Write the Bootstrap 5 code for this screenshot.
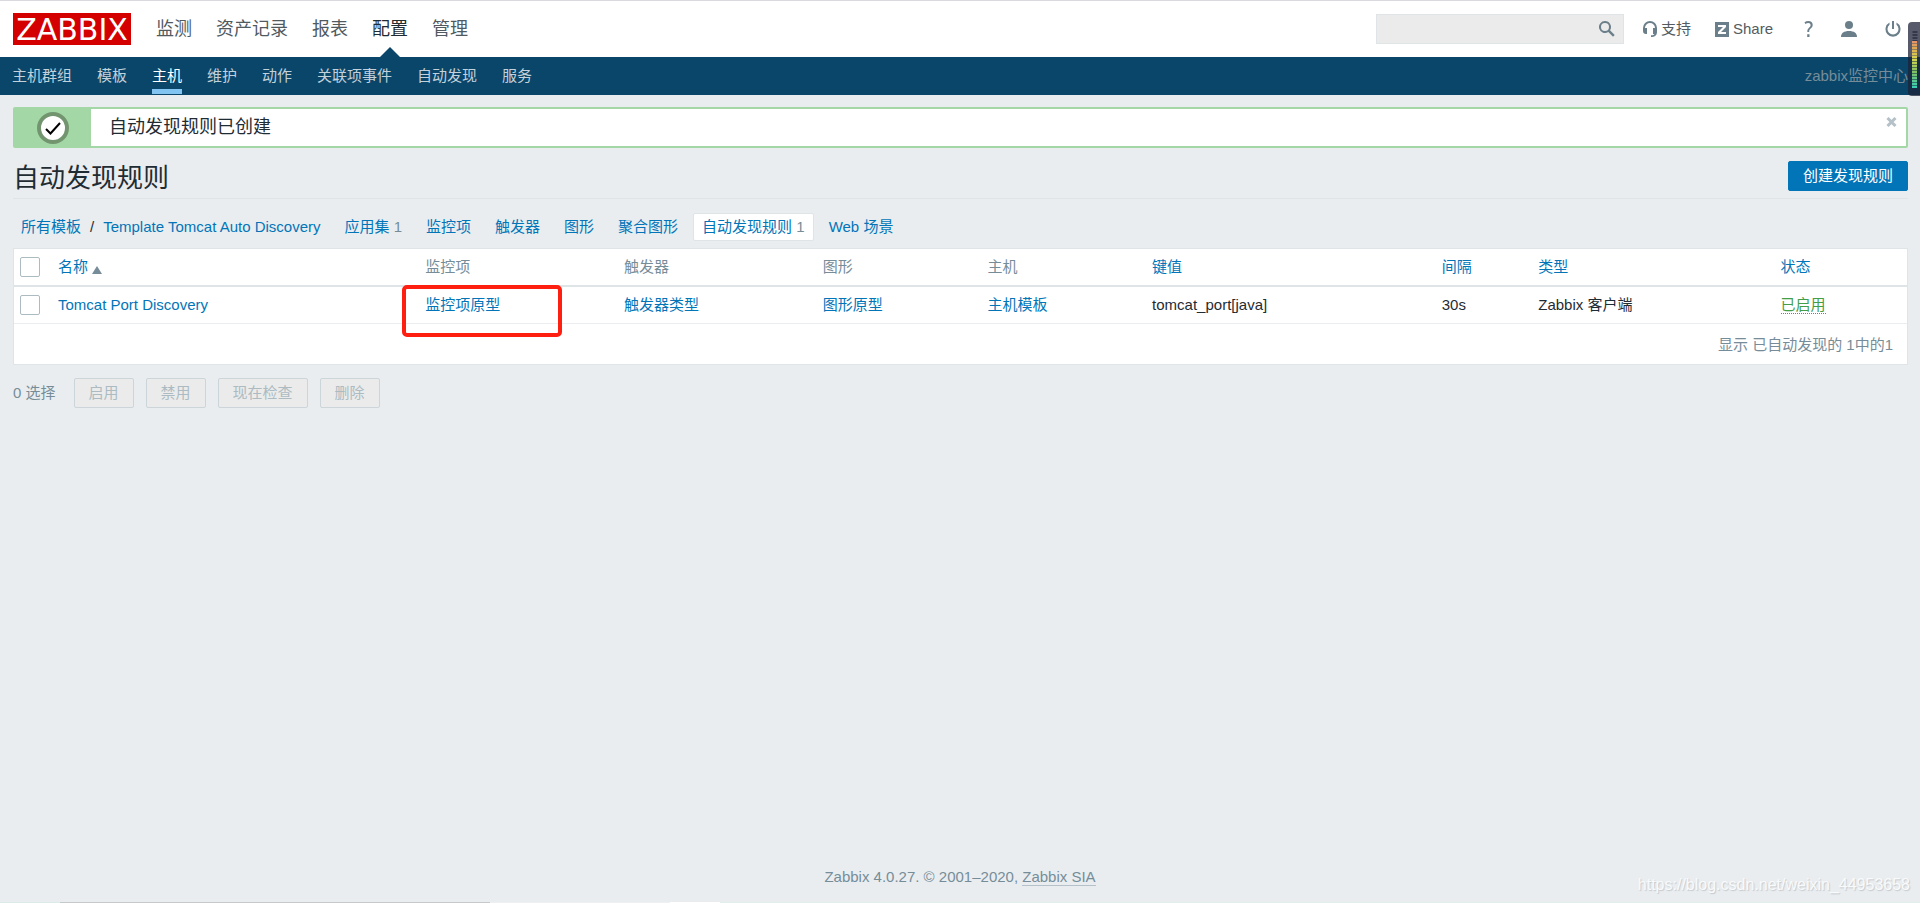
<!DOCTYPE html>
<html lang="zh-CN">
<head>
<meta charset="utf-8">
<meta name="viewport" content="width=device-width, initial-scale=1">
<title>自动发现规则</title>
<link rel="stylesheet" href="https://cdn.jsdelivr.net/npm/bootstrap@5.3.0/dist/css/bootstrap.min.css">
<style>
body{font-family:"Liberation Sans","Noto Sans CJK SC",sans-serif;font-size:15px;line-height:20px;color:#1f2c33;background:#e9edf0}
a{color:#0275b8;text-decoration:none}
.topbar{height:57px;background:#fff;border-top:1px solid #d9d9de;padding:0 19px 0 13px}
.logo{background:#d40000;color:#fff;width:118px;height:32px}
.logo svg{display:block;overflow:visible}
.mainmenu{gap:24px;margin-left:25px;font-size:18px;line-height:26px}
.mainmenu a{color:#505a5f;height:56px;display:flex;align-items:center;position:relative}
.mainmenu a.on{color:#1f2c33}
.mainmenu a.on::after{content:"";position:absolute;bottom:0;left:50%;margin-left:-10px;border:10px solid transparent;border-top:0;border-bottom-color:#0a466a}
.searchbox{width:248px;height:30px;background:#ebebeb;border:1px solid #dfe4e7;margin-right:19px}
.searchbox input{background:none;border:0;outline:0;width:100%}
.searchbox button,.msgclose{background:none;border:0;padding:0;display:flex}
.tools a{color:#525c61;display:flex;align-items:center}
.tools svg{fill:#6b7f8a;flex:none}
.iconlinks{gap:28px;margin-left:31px}
.submenu{height:38px;background:#0a466a;padding:0 12px}
.submenu nav{gap:25px}
.submenu nav a{color:#c3d1da;height:37px;line-height:38px;border-bottom:5px solid transparent}
.submenu nav a.on{color:#fff;border-color:#83c5f2}
.srv{color:#768d99}
.page-area{padding:12px 12px 0 13px}
.okmsg{height:41px;border:2px solid #a3d7a5;border-radius:2px;background:#fff}
.okicon{width:76px;background:#a3d7a5}
.oktext{font-size:18px;padding-left:18px;line-height:36px}
.msgclose{margin:8px 9px 0 0;align-self:flex-start}
.titlerow{height:51px;padding-top:5px;border-bottom:1px solid #dfe4e7}
.titlerow h1{font-size:26px;line-height:34px;padding-top:4px;font-weight:400}
.btn{--bs-btn-font-size:15px;--bs-btn-line-height:20px;--bs-btn-padding-x:14px;--bs-btn-padding-y:4px;--bs-btn-border-radius:2px}
.btn-new{--bs-btn-bg:#0275b8;--bs-btn-color:#fff;--bs-btn-border-color:#0275b8;--bs-btn-hover-bg:#02659f;--bs-btn-hover-color:#fff}
.btn-alt{--bs-btn-disabled-bg:#ebebeb;--bs-btn-disabled-color:#acbbc2;--bs-btn-disabled-border-color:#ccd5d9;--bs-btn-disabled-opacity:1}
.tabs-row{margin-top:14px;height:28px;padding-left:8px;gap:24px}
.tabs-row .num{color:#768d99}
.tabs-row .sep{margin:0 9px}
.tabs-row .cur{background:#fff;border:1px solid #dfe4e7;border-radius:2px;padding:3px 8px;margin:0 -9px}
.listbox{margin-top:7px;background:#fff;border:1px solid #dfe4e7}
.listbox table{table-layout:fixed;width:100%}
.listbox th,.listbox td{font-weight:400;height:37px;padding:0 8px;white-space:nowrap;border-bottom:1px solid #ebeef0;position:relative}
.listbox th{color:#768d99;border-bottom:2px solid #dfe4e7}
.listbox tfoot td{height:41px;border:0;color:#768d99;padding:2px 14px 0 0}
.listbox .form-check-input{width:20px;height:20px;margin:0;border:1px solid #acbbc2;border-radius:2px;display:block}
.listbox .pick{padding:0 0 0 6px}
.tri{display:inline-block;border:5px solid transparent;border-top:0;border-bottom:8px solid #768d99;vertical-align:-2px;margin-left:4px}
.enabled{color:#429e47;border-bottom:1px dotted #429e47}
.redframe{position:absolute;left:-15px;top:-2px;width:160px;height:52px;border:4px solid #ff1f10;border-radius:5px;pointer-events:none}
.actions{margin-top:13px;gap:12px;color:#768d99}
.actions span{margin-right:6px}
.foot{color:#768d99;padding-bottom:15px}
.foot a{color:#768d99;border-bottom:1px solid #b5c1c8}
.wm{position:absolute;right:10px;bottom:8px;font-size:16px;color:#f8fafb;text-shadow:1px 1px 1px #c4c8cb}
.meter{position:absolute;right:0;top:22px;width:12px;height:74px}
.edge{height:1px;background:linear-gradient(90deg,#dcebea 0 60px,#c6c9cb 60px 490px,#eef1f3 490px 670px,#fff 670px 720px,#e2eeea 720px)}
</style>
</head>
<body class="min-vh-100 d-flex flex-column position-relative">
<header>
<div class="topbar d-flex align-items-center">
<a class="logo" href="#" aria-label="ZABBIX"><svg width="118" height="32" viewBox="0 0 118 32"><text x="59" y="27" text-anchor="middle" font-family="DejaVu Sans" font-size="30" fill="#fff">ZABBIX</text></svg></a>
<nav class="mainmenu d-flex"><a href="#">监测</a><a href="#">资产记录</a><a href="#">报表</a><a class="on" href="#">配置</a><a href="#">管理</a></nav>
<div class="tools d-flex align-items-center ms-auto">
<form class="searchbox d-flex align-items-center pe-2"><input type="text" aria-label="搜索"><button type="button" aria-label="搜索"><svg width="16" height="16" viewBox="0 0 16 16"><path d="M6 0a6 6 0 1 0 3.300 11l4.700 4.700 1.700-1.700L11 9.300A6 6 0 0 0 6 0zm0 2a4 4 0 1 1 0 8 4 4 0 0 1 0-8z"/></svg></button></form>
<a href="#"><svg class="me-1" width="14" height="16" viewBox="0 0 14 16"><path d="M7 0a7 7 0 0 0-7 7v3a3 3 0 0 0 3 3h1V7H2a5 5 0 0 1 10 0h-2v6h1.500c-.5 1-1.500 1.300-3.500 1.300V16c3 0 6-1 6-5V7a7 7 0 0 0-7-7z"/></svg>支持</a>
<a class="ms-4" href="#"><svg class="me-1" width="14" height="15" viewBox="0 0 14 15"><path d="M0 0h14v15H0z"/><path d="M3 3h8v2L6 10h5v2H3v-2l5-5H3z" fill="#fff"/></svg>Share</a>
<div class="iconlinks d-flex align-items-center">
<a href="#" aria-label="帮助"><svg width="9" height="16" viewBox="0 0 9 16"><path d="M.5 1.300C1.700.4 3 0 4.400 0 7 0 8.700 1.500 8.700 3.800c0 1.800-.8 2.700-2 3.800C5.500 8.700 5.200 9.300 5.200 11H3.300c0-2 .4-3 1.700-4.200C6.100 5.800 6.600 5.200 6.600 4c0-1.300-.9-2.100-2.300-2.100-1 0-2 .3-3 1zM3.200 13.300h2.300V16H3.200z"/></svg></a>
<a href="#" aria-label="用户"><svg width="16" height="16" viewBox="0 0 16 16"><circle cx="8" cy="4" r="4"/><path d="M0 16c0-4 3-6 8-6s8 2 8 6z"/></svg></a>
<a href="#" aria-label="退出"><svg width="16" height="16" viewBox="0 0 16 16"><path d="M7 0h2v8H7z"/><path d="M4.500 1.500v2.300a5.500 5.500 0 1 0 7 0V1.500a7.500 7.500 0 1 1-7 0z"/></svg></a>
</div>
</div>
</div>
<div class="submenu d-flex justify-content-between">
<nav class="d-flex"><a href="#">主机群组</a><a href="#">模板</a><a class="on" href="#">主机</a><a href="#">维护</a><a href="#">动作</a><a href="#">关联项事件</a><a href="#">自动发现</a><a href="#">服务</a></nav>
<span class="srv align-self-center">zabbix监控中心</span>
</div>
</header>
<main class="page-area flex-grow-1">
<div class="okmsg d-flex"><div class="okicon d-flex align-items-center justify-content-center"><svg width="32" height="32" viewBox="0 0 32 32"><circle cx="16" cy="16" r="14" fill="#fff" stroke="#72956f" stroke-width="4"/><path d="M9 17l4.500 4.500L23 11" fill="none" stroke="#000" stroke-width="2"/></svg></div><div class="oktext flex-grow-1">自动发现规则已创建</div><button class="msgclose" type="button" aria-label="关闭"><svg width="11" height="10" viewBox="0 0 11 10"><path d="M1.500 1l8 8m0-8l-8 8" stroke="#b5c1c8" stroke-width="3"/></svg></button></div>
<div class="titlerow d-flex align-items-center justify-content-between"><h1 class="mb-0">自动发现规则</h1><button class="btn btn-new" type="button">创建发现规则</button></div>
<nav class="tabs-row d-flex align-items-center"><span><a href="#">所有模板</a><span class="sep">/</span><a href="#">Template Tomcat Auto Discovery</a></span><span><a href="#">应用集</a> <span class="num">1</span></span><a href="#">监控项</a><a href="#">触发器</a><a href="#">图形</a><a href="#">聚合图形</a><span class="cur"><a href="#">自动发现规则</a> <span class="num">1</span></span><a href="#">Web 场景</a></nav>
<div class="listbox">
<table>
<colgroup><col style="width:36px"><col style="width:19.4%"><col style="width:10.5%"><col style="width:10.5%"><col style="width:8.7%"><col style="width:8.7%"><col style="width:15.3%"><col style="width:5.1%"><col style="width:12.8%"><col></colgroup>
<thead><tr><th class="pick"><input class="form-check-input" type="checkbox" aria-label="全选"></th><th><a href="#">名称<span class="tri"></span></a></th><th>监控项</th><th>触发器</th><th>图形</th><th>主机</th><th><a href="#">键值</a></th><th><a href="#">间隔</a></th><th><a href="#">类型</a></th><th><a href="#">状态</a></th></tr></thead>
<tbody><tr><td class="pick"><input class="form-check-input" type="checkbox" aria-label="Tomcat Port Discovery"></td><td><a href="#">Tomcat Port Discovery</a></td><td><a href="#">监控项原型</a><span class="redframe"></span></td><td><a href="#">触发器类型</a></td><td><a href="#">图形原型</a></td><td><a href="#">主机模板</a></td><td>tomcat_port[java]</td><td>30s</td><td>Zabbix 客户端</td><td><a class="enabled" href="#">已启用</a></td></tr></tbody>
<tfoot><tr><td colspan="10" class="text-end">显示 已自动发现的 1中的1</td></tr></tfoot>
</table>
</div>
<div class="actions d-flex align-items-center"><span>0 选择</span><button class="btn btn-alt" type="button" disabled>启用</button><button class="btn btn-alt" type="button" disabled>禁用</button><button class="btn btn-alt" type="button" disabled>现在检查</button><button class="btn btn-alt" type="button" disabled>删除</button></div>
</main>
<footer class="foot text-center">Zabbix 4.0.27. © 2001–2020, <a href="#">Zabbix SIA</a></footer>
<div class="edge"></div>
<div class="wm">https://blog.csdn.net/weixin_44953658</div>
<svg class="meter" viewBox="0 0 12 74">
<defs><linearGradient id="lvl" gradientUnits="userSpaceOnUse" x1="0" y1="19" x2="0" y2="66"><stop offset="0" stop-color="#e8926a"/><stop offset=".15" stop-color="#e0a850"/><stop offset=".38" stop-color="#d8d850"/><stop offset=".65" stop-color="#80c060"/><stop offset="1" stop-color="#35d0b8"/></linearGradient></defs>
<path d="M12 0H4Q0 0 0 4v66q0 4 4 4h8z" fill="#1e2338" fill-opacity=".75"/>
<path d="M7 9v10" stroke="#34384a" stroke-width="5" stroke-dasharray="2 1" transform="translate(0 0)"/>
<path d="M6.500 19v47" stroke="url(#lvl)" stroke-width="5" stroke-dasharray="2 1"/>
<path d="M6.500 19v47" stroke="url(#lvl)" stroke-opacity=".45" stroke-width="5"/>
</svg>
<script src="https://cdn.jsdelivr.net/npm/bootstrap@5.3.0/dist/js/bootstrap.bundle.min.js"></script>
</body>
</html>
